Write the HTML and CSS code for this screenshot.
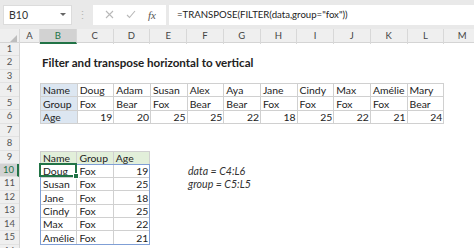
FILE: index.html
```html
<!DOCTYPE html>
<html lang="en">
<head>
  <meta charset="UTF-8" />
  <title>Filter and transpose horizontal to vertical</title>
  <link rel="stylesheet" href="styles.css">
</head>
<body>
  <div id="toolbar">
    <div class="namebox"><span>B10</span><span class="caret"></span></div>
    <div class="grip">⋮</div>
    <div class="fx-buttons">
      <svg width="9" height="9" viewBox="0 0 9 9"><path d="M1 1 L8 8 M8 1 L1 8" stroke="#b8b8b8" stroke-width="1.1" fill="none"/></svg>
      <svg width="10" height="9" viewBox="0 0 10 9"><path d="M1 5 L3.5 7.5 L9 1" stroke="#b8b8b8" stroke-width="1.1" fill="none"/></svg>
      <span class="fx">fx</span>
    </div>
    <div class="formula">=TRANSPOSE(FILTER(data,group="fox"))</div>
  </div>

  <div class="col-heads">
    <div class="corner"><span class="corner-tri"></span></div>
    <div>A</div><div class="active">B</div><div>C</div><div>D</div><div>E</div><div>F</div>
    <div>G</div><div>H</div><div>I</div><div>J</div><div>K</div><div>L</div><div>M</div>
  </div>

  <div class="sheet">
    <div class="row-heads">
      <div>1</div><div>2</div><div>3</div><div>4</div><div>5</div><div>6</div><div>7</div><div>8</div>
      <div>9</div><div class="active">10</div><div>11</div><div>12</div><div>13</div><div>14</div><div>15</div><div>16</div>
    </div>

    <div class="cells">
      <div class="title">Filter and transpose horizontal to vertical</div>

      <table class="data-h">
        <tr><td class="label">Name</td><td>Doug</td><td>Adam</td><td>Susan</td><td>Alex</td><td>Aya</td><td>Jane</td><td>Cindy</td><td>Max</td><td>Amélie</td><td>Mary</td></tr>
        <tr><td class="label">Group</td><td>Fox</td><td>Bear</td><td>Fox</td><td>Bear</td><td>Bear</td><td>Fox</td><td>Fox</td><td>Fox</td><td>Fox</td><td>Bear</td></tr>
        <tr class="num"><td class="label">Age</td><td>19</td><td>20</td><td>25</td><td>25</td><td>22</td><td>18</td><td>25</td><td>22</td><td>21</td><td>24</td></tr>
      </table>

      <table class="data-v">
        <tr class="head"><td>Name</td><td>Group</td><td>Age</td></tr>
        <tr><td>Doug</td><td>Fox</td><td class="n">19</td></tr>
        <tr><td>Susan</td><td>Fox</td><td class="n">25</td></tr>
        <tr><td>Jane</td><td>Fox</td><td class="n">18</td></tr>
        <tr><td>Cindy</td><td>Fox</td><td class="n">25</td></tr>
        <tr><td>Max</td><td>Fox</td><td class="n">22</td></tr>
        <tr><td>Amélie</td><td>Fox</td><td class="n">21</td></tr>
      </table>
      <div class="spill"></div>
      <div class="selected"></div>

      <div class="notes">
        <div>data = C4:L6</div>
        <div>group = C5:L5</div>
      </div>
    </div>
  </div>
</body>
</html>
```

FILE: styles.css
```css
body {
  margin: 0;
  background: #fff;
  font-family: Lato, 'Open Sans', sans-serif;
  color: #222;
  overflow: hidden;
}

#toolbar {
  display: flex;
  align-items: center;
  height: 29px;
  padding-left: 3px;
  background: #e9e9e9;
  box-sizing: border-box;
}

.namebox {
  display: flex;
  align-items: center;
  justify-content: space-between;
  width: 69px;
  height: 20px;
  padding: 0 5px;
  box-sizing: border-box;
  background: #fff;
  border: 1px solid #dcdcdc;
  font-size: 10.5px;
  color: #333;
}

.caret {
  border-left: 3px solid transparent;
  border-right: 3px solid transparent;
  border-top: 3px solid #666;
}

.grip {
  width: 21px;
  text-align: center;
  color: #b5b5b5;
  font-size: 11px;
}

.fx-buttons {
  display: flex;
  align-items: center;
  justify-content: space-around;
  width: 73px;
  height: 20px;
  padding: 0 4px 0 6px;
  box-sizing: border-box;
  background: #fff;
}

.fx {
  font-family: 'Liberation Serif', serif;
  font-style: italic;
  font-size: 11px;
  color: #555;
}

.formula {
  flex: 1;
  height: 20px;
  margin-left: 3px;
  padding-left: 8px;
  background: #fff;
  font-size: 9.6px;
  line-height: 20px;
  color: #222;
}

.col-heads {
  display: grid;
  grid-template-columns: 20px 20px repeat(12, 36.75px);
  height: 14px;
  background: #efefef;
  border-bottom: 1px solid #d4d4d4;
  box-sizing: border-box;
}

.col-heads div {
  border-right: 1px solid #d8d8d8;
  text-align: center;
  font-size: 9.5px;
  line-height: 14px;
  color: #444;
}

.col-heads .active {
  background: #d2d2d2;
  border-bottom: 2px solid #217346;
  color: #217346;
  line-height: 13px;
}

.corner {
  position: relative;
}

.corner-tri {
  position: absolute;
  right: 2px;
  bottom: 2px;
  border-left: 7px solid transparent;
  border-bottom: 7px solid #bdbdbd;
}

.sheet {
  display: flex;
}

.row-heads {
  flex: none;
  display: grid;
  grid-template-rows: repeat(16, 13.45px);
  width: 20px;
  background: #efefef;
  border-right: 1px solid #d4d4d4;
  box-sizing: border-box;
  overflow: hidden;
}

.row-heads div {
  border-bottom: 1px solid #e2e2e2;
  text-align: center;
  font-size: 9.5px;
  line-height: 12.4px;
  color: #555;
  overflow: hidden;
}

.row-heads .active {
  background: #d2d2d2;
  border-right: 2px solid #217346;
  color: #217346;
}

.cells {
  flex: none;
  display: grid;
  grid-template-columns: 20px repeat(11, 36.75px);
  grid-template-rows: repeat(16, 13.45px);
}

.title {
  grid-row: 2;
  grid-column: 2 / span 9;
  font-weight: bold;
  font-size: 11.6px;
  line-height: 14px;
  padding-left: 2px;
  white-space: nowrap;
}

table {
  border-collapse: collapse;
  table-layout: fixed;
  width: 100%;
  height: 100%;
  font-size: 10.4px;
}

td {
  border: 1px solid #d0d0d0;
  padding: 0 1px 0 2px;
  white-space: nowrap;
  overflow: hidden;
  vertical-align: bottom;
  line-height: 12px;
}

.data-h {
  grid-row: 4 / span 3;
  grid-column: 2 / span 11;
}

.data-h .label {
  background: #dce6f1;
}

.data-h .num td {
  text-align: right;
}

.data-h .num .label {
  text-align: left;
}

.data-v {
  grid-row: 9 / span 7;
  grid-column: 2 / span 3;
}

.data-v .head td {
  background: #e2efda;
}

.data-v .n {
  text-align: right;
}

.spill {
  grid-row: 10 / span 6;
  grid-column: 2 / span 3;
  border: 1px solid #7f9fd6;
  z-index: 1;
}

.selected {
  grid-row: 10;
  grid-column: 2;
  position: relative;
  border: 2px solid #217346;
  margin: -1px 0 0 -1px;
  z-index: 2;
}

.selected::after {
  content: '';
  position: absolute;
  right: -4px;
  bottom: -4px;
  width: 4px;
  height: 4px;
  background: #217346;
  border: 1px solid #fff;
}

.notes {
  grid-row: 10 / span 2;
  grid-column: 6 / span 4;
  display: grid;
  grid-template-rows: repeat(2, 13.45px);
  padding-left: 1px;
  font-style: italic;
  font-size: 10.6px;
  line-height: 14px;
  color: #333;
}
```
